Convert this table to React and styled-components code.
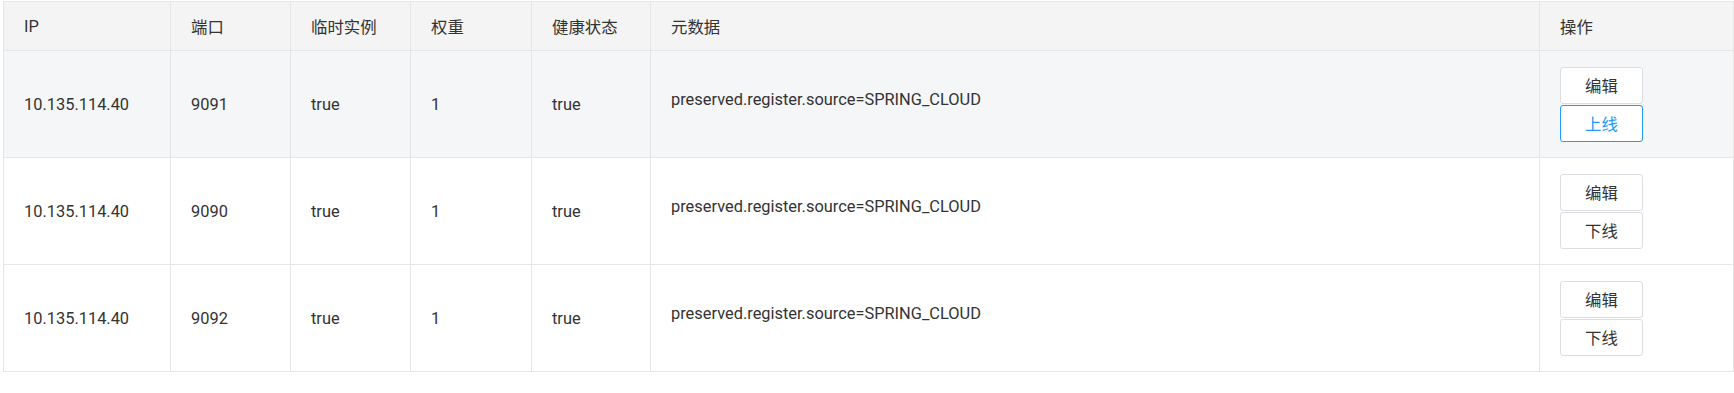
import React from 'react';
import styled, { createGlobalStyle } from 'styled-components';

const GlobalStyle = createGlobalStyle`
    body {
        margin: 0;
        background: #fff;
        font-family: Roboto, "Noto Sans CJK SC", sans-serif;
        color: #333;
    }
`;

const Page = styled.div`
    padding: 1px 1px 0 3px;
`;

const Table = styled.table`
    width: 1730px;
    border-collapse: collapse;
    table-layout: fixed;
    font-size: 16.4px;
`;

const HeadCell = styled.th`
    height: 48px;
    padding: 0 20px;
    text-align: left;
    font-weight: 400;
    color: #333;
    background: #f4f4f4;
    border: 1px solid #e6e6e6;
`;

const Row = styled.tr`
    background: ${p => (p.$hover ? '#f5f6f8' : '#fff')};
`;

const Cell = styled.td`
    height: 106px;
    padding: 0 20px;
    border: 1px solid #e6e6e6;
    vertical-align: middle;
`;

const Meta = styled.div`
    padding-bottom: 9px;
`;

const Actions = styled.div`
    display: flex;
    flex-direction: column;
    gap: 1px;
    width: 83px;
`;

const ActionButton = styled.button`
    height: 37px;
    padding: 0;
    border: 1px solid ${p => (p.$primary ? '#209bfa' : '#dcdee3')};
    border-radius: 3px;
    background: #fff;
    color: ${p => (p.$primary ? '#209bfa' : '#333')};
    font-family: Roboto, "Noto Sans CJK SC", sans-serif;
    font-size: 16.4px;
    cursor: pointer;
`;

const columns = [
    { title: 'IP', width: 167 },
    { title: '端口', width: 120 },
    { title: '临时实例', width: 120 },
    { title: '权重', width: 121 },
    { title: '健康状态', width: 119 },
    { title: '元数据', width: 889 },
    { title: '操作', width: 194 },
];

const instances = [
    { ip: '10.135.114.40', port: 9091, online: false },
    { ip: '10.135.114.40', port: 9090, online: true },
    { ip: '10.135.114.40', port: 9092, online: true },
];

const App = () => (
    <Page>
        <GlobalStyle />
        <Table>
            <colgroup>
                {columns.map(c => <col key={c.title} style={{ width: c.width }} />)}
            </colgroup>
            <thead>
                <tr>
                    {columns.map(c => <HeadCell key={c.title}>{c.title}</HeadCell>)}
                </tr>
            </thead>
            <tbody>
                {instances.map((row, i) => (
                    <Row key={row.port} $hover={i === 0}>
                        <Cell>{row.ip}</Cell>
                        <Cell>{row.port}</Cell>
                        <Cell>true</Cell>
                        <Cell>1</Cell>
                        <Cell>true</Cell>
                        <Cell><Meta>preserved.register.source=SPRING_CLOUD</Meta></Cell>
                        <Cell>
                            <Actions>
                                <ActionButton>编辑</ActionButton>
                                {row.online
                                    ? <ActionButton>下线</ActionButton>
                                    : <ActionButton $primary>上线</ActionButton>}
                            </Actions>
                        </Cell>
                    </Row>
                ))}
            </tbody>
        </Table>
    </Page>
);

export default App;
